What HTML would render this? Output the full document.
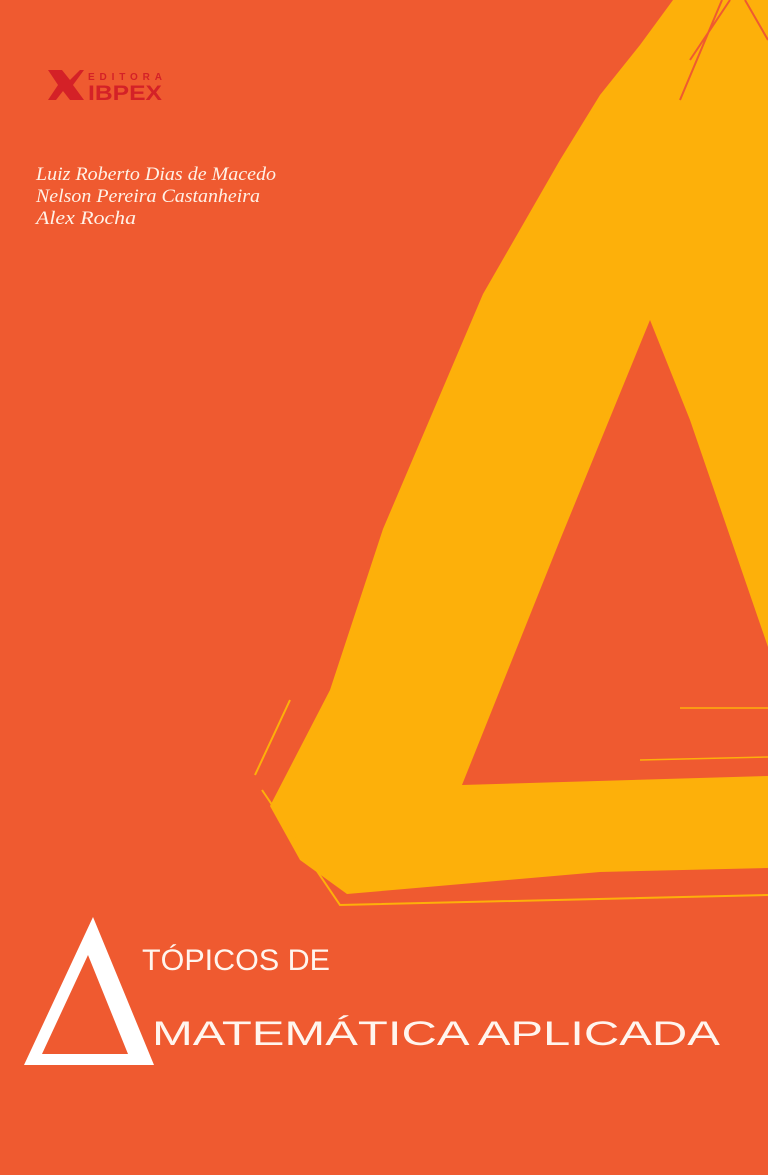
<!DOCTYPE html>
<html><head><meta charset="utf-8"><style>
html,body{margin:0;padding:0}
body{width:768px;height:1175px;background:#EF5A30;position:relative;overflow:hidden;font-family:"Liberation Sans",sans-serif}
svg{position:absolute;left:0;top:0}
</style></head><body>
<svg width="768" height="1175" viewBox="0 0 768 1175">
<path fill="#FDB00A" fill-rule="evenodd" d="M673,0 L768,0 L768,868 L600,872 L347,894 L300,860 L270,806 L330,690 L383,529 L483,294 L560,160 L600,95 L640,45 Z M650,320 L690,420 L768,647 L768,776 L462,785 L560,540 Z"/>
<path fill="none" stroke="#EF5A30" stroke-width="2" d="M745,0 L768,40 M730,0 L690,60 M722,0 L680,100"/>
<path fill="none" stroke="#FDB00A" stroke-width="2" d="M262,790 L340,905 L768,895 M255,775 L290,700"/>
<path fill="none" stroke="#FDB00A" stroke-width="1.5" d="M680,708 L768,708 M640,760 L768,757"/>
<g font-family="Liberation Serif, serif" font-style="italic" fill="#FFF1E6" font-size="19">
<text x="36" y="180" textLength="240" lengthAdjust="spacingAndGlyphs">Luiz Roberto Dias de Macedo</text>
<text x="36" y="202" textLength="224" lengthAdjust="spacingAndGlyphs">Nelson Pereira Castanheira</text>
<text x="36" y="224" textLength="100" lengthAdjust="spacingAndGlyphs">Alex Rocha</text>
</g>
<path fill="#D42127" d="M48,70 L62,70 L70,80 L80,70 L84,70 L73,85 L84,100 L70,100 L63,91 L56,100 L48,100 L58,85 Z"/>
<text x="88" y="80" font-size="10" font-weight="bold" fill="#D42127" textLength="74" lengthAdjust="spacing">EDITORA</text>
<text x="88" y="100" font-size="21" font-weight="bold" fill="#D42127" textLength="74" lengthAdjust="spacingAndGlyphs">IBPEX</text>
<path fill="#fff" fill-rule="evenodd" d="M93,917 L154,1065 L24,1065 Z M88,955 L42,1054 L128,1054 Z"/>
<text x="142" y="970" font-size="30" fill="#FFF5EE" textLength="188" lengthAdjust="spacingAndGlyphs">TÓPICOS DE</text>
<text x="152" y="1045" font-size="34" fill="#FFF5EE" textLength="568" lengthAdjust="spacingAndGlyphs">MATEMÁTICA APLICADA</text>
</svg>
</body></html>
